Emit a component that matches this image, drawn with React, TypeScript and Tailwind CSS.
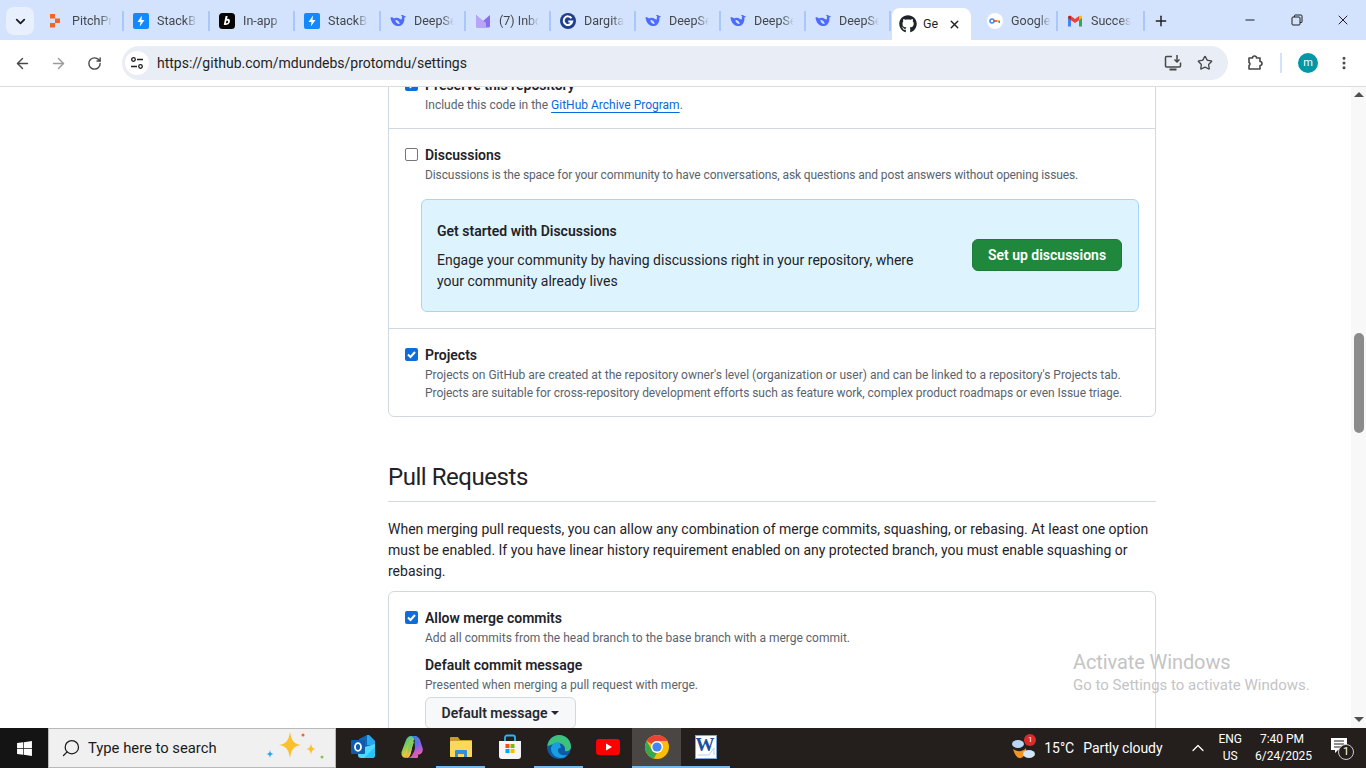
import { ReactNode } from 'react'
import { ArrowLeft, ArrowRight, ChevronDown, ChevronUp, EllipsisVertical, Minus, Plus, RotateCw, Search, Star, X } from 'lucide-react'
import { FaGithub, FaWindows } from 'react-icons/fa'

const font = { fontFamily: 'Roboto, "Noto Sans", sans-serif' }

const PitchIcon = () => (
  <svg width="16" height="16" viewBox="0 0 16 16">
    <rect x="2" y="1" width="5" height="4.5" fill="#f26522" />
    <rect x="7" y="5.500" width="5" height="4.500" fill="#f26522" />
    <rect x="2" y="10" width="5" height="4.500" fill="#f26522" />
  </svg>
)
const StackIcon = () => (
  <svg width="16" height="16" viewBox="0 0 16 16">
    <rect width="16" height="16" rx="2" fill="#1389fd" />
    <path d="M9 2.500 4.500 9h3L6.800 13.500 11.500 7h-3z" fill="#fff" />
  </svg>
)
const BoltIcon = () => (
  <svg width="16" height="16" viewBox="0 0 16 16">
    <rect width="16" height="16" rx="3.500" fill="#050505" />
    <path d="M6.600 3h2l-.6 3c2.400-.6 3.400 1 2.800 3-.6 2.300-3.200 3.500-6 2.800zM7.400 7.800 6.900 10.200c1.400.2 2.200-.4 2.300-1.400.1-.9-.7-1.300-1.800-1z" fill="#fff" />
  </svg>
)
const DeepSeekIcon = () => (
  <svg width="16" height="16" viewBox="0 0 16 16">
    <path d="M.5 4.500C2 3.800 3 4.600 4 5.500 5.500 4.500 8 4.600 10 6c.8.600 1.500.5 2 0-.4-.8-.3-1.800.3-2.400L11 2.400c1-.5 2.200-.4 3 .4.500.5 1 .4 1.800.2-.3 1.200-.9 1.600-1.500 1.800.4 2.200-.3 5-2 6.600-1.800 1.700-4.300 2-6.300 1.300C3 11.700.9 8.500.5 4.500z" fill="#4d6bfe" />
    <path d="M5.500 6.800c2 .3 3.800 1.800 4.200 4.200-2.400.1-4.400-1.700-4.200-4.200z" fill="#d3e3fd" />
  </svg>
)
const ProtonIcon = () => (
  <svg width="16" height="16" viewBox="0 0 16 16">
    <path d="M1 2 8 8l7-6v11a1.500 1.500 0 0 1-1.500 1.500h-11A1.500 1.500 0 0 1 1 13z" fill="#8a6cf0" />
    <path d="M1 2 8 8l3 1.500v5H2.500A1.500 1.500 0 0 1 1 13z" fill="#b9a5f7" />
  </svg>
)
const DargitaIcon = () => (
  <svg width="16" height="16" viewBox="0 0 16 16">
    <circle cx="8" cy="8" r="8" fill="#1f3f8f" />
    <path d="M11.500 5.200A4.300 4.300 0 1 0 12.200 8.500H8.300" fill="none" stroke="#fff" strokeWidth="2" />
  </svg>
)
const GoogleKeyIcon = () => (
  <svg width="16" height="16" viewBox="0 0 16 16">
    <circle cx="8" cy="8" r="8" fill="#fff" />
    <circle cx="5" cy="8" r="2" fill="none" stroke="#4285f4" strokeWidth="1.500" />
    <rect x="7" y="7.200" width="3" height="1.600" fill="#ea4335" />
    <rect x="10" y="7.200" width="3" height="1.600" fill="#fbbc04" />
    <rect x="11.500" y="8" width="1.500" height="2" fill="#34a853" />
  </svg>
)
const GmailIcon = () => (
  <svg width="16" height="16" viewBox="0 0 16 16">
    <path d="M1 4v9.500h3V7z" fill="#4285f4" />
    <path d="M15 4v9.500h-3V7z" fill="#34a853" />
    <path d="M12 3v4.200l3-2.200V4c0-1-1.300-1.700-2.200-1z" fill="#fbbc04" />
    <path d="M4 3v4.200L8 10l4-2.800V3L8 6z" fill="#ea4335" />
    <path d="M1 4v1l3 2.200V3C3 2.300 1 3 1 4z" fill="#c5221f" />
  </svg>
)

type TabData = { icon: ReactNode; title: string; width: string }

const tabsLeft: TabData[] = [
  { icon: <PitchIcon />, title: 'PitchPr', width: 'w-[85px]' },
  { icon: <StackIcon />, title: 'StackBl', width: 'w-[86px]' },
  { icon: <BoltIcon />, title: 'In-app', width: 'w-[85px]' },
  { icon: <StackIcon />, title: 'StackBl', width: 'w-[86px]' },
  { icon: <DeepSeekIcon />, title: 'DeepSe', width: 'w-[85px]' },
  { icon: <ProtonIcon />, title: '(7) Inbc', width: 'w-[85px]' },
  { icon: <DargitaIcon />, title: 'Dargita', width: 'w-[85px]' },
  { icon: <DeepSeekIcon />, title: 'DeepSe', width: 'w-[85px]' },
  { icon: <DeepSeekIcon />, title: 'DeepSe', width: 'w-[85px]' },
  { icon: <DeepSeekIcon />, title: 'DeepSe', width: 'w-[85px]' },
]

const Tab = ({ icon, title, width }: TabData) => (
  <div className={`${width} h-[20px] flex items-center border-r-2 border-[#a8c7fa] pl-[9px] shrink-0`}>
    <div className="w-[16px] h-[16px] shrink-0">{icon}</div>
    <div
      className="ml-[8px] mt-[2px] w-[40px] overflow-hidden whitespace-nowrap text-[12.5px] text-[#44474a]"
      style={{ maskImage: 'linear-gradient(to right, black 70%, transparent)' }}
    >
      {title}
    </div>
  </div>
)

const TabStrip = () => (
  <div className="h-[40px] bg-[#d3e3fd] flex items-end relative shrink-0">
    <div className="ml-[6px] mb-[5px] w-[28px] h-[28px] rounded-lg bg-[#e8f0fe] flex items-center justify-center shrink-0">
      <ChevronDown size={15} strokeWidth={3} color="#1f1f1f" />
    </div>
    <div className="ml-[5px] h-[40px] flex items-center pt-[1px]">
      {tabsLeft.map((t, i) => (
        <Tab key={i} {...t} />
      ))}
      <div className="w-[79px] h-[32px] mt-[7px] ml-[1px] bg-white rounded-t-lg flex items-center pl-[7px] shrink-0">
        <FaGithub size={18} color="#1f2328" />
        <span className="ml-[6px] w-[16px] overflow-hidden text-[12.5px] text-[#1f1f1f]">Ge</span>
        <X size={13} strokeWidth={2.5} className="ml-[9px]" color="#1f1f1f" />
      </div>
      <div className="w-[7px]" />
      <Tab icon={<GoogleKeyIcon />} title="Google" width="w-[80px]" />
      <Tab icon={<GmailIcon />} title="Success" width="w-[87px]" />
      <Plus size={16} strokeWidth={2.2} color="#1f1f1f" className="ml-[8px]" />
    </div>
    <div className="ml-auto h-[40px] flex items-center pr-[15px]">
      <Minus size={14} color="#1f1f1f" />
      <svg width="12" height="12" viewBox="0 0 12 12" fill="none" stroke="#1f1f1f" strokeWidth="1" className="ml-[34px]">
        <rect x="1" y="3" width="8" height="8" rx="1" />
        <path d="M3.500 3V1.500a.5.5 0 0 1 .5-.5h6a1 1 0 0 1 1 1v6a.5.5 0 0 1-.5.5H9" />
      </svg>
      <X size={16} strokeWidth={1.5} color="#1f1f1f" className="ml-[32px]" />
    </div>
  </div>
)

const InstallIcon = () => (
  <svg width="18" height="18" viewBox="0 0 18 18" fill="none" stroke="#474747" strokeWidth="1.500">
    <path d="M8 2.500H2.500a1 1 0 0 0-1 1V12a1 1 0 0 0 1 1h13a1 1 0 0 0 1-1V8.500" />
    <path d="M13 1v7M10.500 5.500 13 8l2.500-2.500" />
    <path d="M5.500 15.500h7" strokeWidth="2" />
  </svg>
)

const ExtensionIcon = () => (
  <svg width="18" height="18" viewBox="0 0 18 18" fill="none" stroke="#474747" strokeWidth="1.600" strokeLinejoin="round">
    <path d="M3 4h3.500a2 2 0 0 1 4 0H14v3.500a2 2 0 0 1 0 4V15H3v-3.500a1.800 1.800 0 0 0 1-1.500 1.800 1.800 0 0 0-1-1.500z" />
  </svg>
)

const Toolbar = () => (
  <div className="h-[47px] bg-white border-b border-[#dcdcdc] flex items-center shrink-0">
    <ArrowLeft size={17} strokeWidth={2} color="#474747" className="ml-[14px]" />
    <ArrowRight size={17} strokeWidth={2} color="#9a9a9a" className="ml-[19px]" />
    <RotateCw size={15} strokeWidth={2.2} color="#474747" className="ml-[20px]" />
    <div className="ml-[20px] w-[1106px] h-[34px] rounded-full bg-[#e9eef6] flex items-center pl-[3px] pr-[15px]">
      <div className="w-[24px] h-[24px] rounded-full bg-white flex items-center justify-center">
        <svg width="14" height="14" viewBox="0 0 14 14" fill="none" stroke="#1f1f1f" strokeWidth="1.300">
          <circle cx="3.500" cy="3.500" r="1.800" />
          <path d="M7 3.500h6M1 10.500h6" />
          <circle cx="10.500" cy="10.500" r="1.800" />
        </svg>
      </div>
      <span className="ml-[8px] text-[14px] text-[#1f1f1f]">https://github.com/mdundebs/protomdu/settings</span>
      <div className="ml-auto">
        <InstallIcon />
      </div>
      <Star size={16} strokeWidth={2} color="#474747" className="ml-[15px]" />
    </div>
    <div className="ml-[18px]">
      <ExtensionIcon />
    </div>
    <div className="ml-[16px] w-[2px] h-[20px] bg-[#d3e3fd]" />
    <div className="ml-[16px] w-[20px] h-[20px] rounded-full bg-[#0097a7] text-white text-[11px] flex items-center justify-center">m</div>
    <EllipsisVertical size={16} strokeWidth={2.5} color="#474747" className="ml-[18px]" />
  </div>
)

const Check = ({ checked = true }: { checked?: boolean }) =>
  checked ? (
    <div className="w-[13px] h-[13px] -mt-[1px] rounded-[2px] bg-[#0f6cdb] flex items-center justify-center shrink-0">
      <svg width="11" height="11" viewBox="0 0 11 11" fill="none" stroke="#fff" strokeWidth="2">
        <path d="M2 5.500 4.500 8 9 3" />
      </svg>
    </div>
  ) : (
    <div className="w-[13px] h-[13px] -mt-[1px] rounded-[2px] bg-white border border-[#767676] shrink-0" />
  )

const Title = ({ children }: { children: ReactNode }) => (
  <div className="text-[14px] leading-[20px] font-semibold text-[#1f2328]">{children}</div>
)

const Note = ({ children, tight = '' }: { children: ReactNode; tight?: string }) => (
  <div className={`text-[12px] leading-[18px] text-[#59636e] whitespace-nowrap ${tight}`}>{children}</div>
)

const Settings = () => (
  <div className="ml-[388px] w-[768px] -mt-[13px]">
    <div className="border border-[#d1d9e0] rounded-b-md">
      <div className="h-[54px] px-[16px] border-b border-[#d1d9e0]">
        <div className="flex items-center gap-[7px] h-[20px]">
          <Check />
          <Title>Preserve this repository</Title>
        </div>
        <div className="pl-[20px] pt-[1px]">
          <Note>
            Include this code in the <span className="text-[#0969da] underline underline-offset-[3px]">GitHub Archive Program</span>.
          </Note>
        </div>
      </div>
      <div className="h-[200px] px-[16px] pt-[16px] border-b border-[#d1d9e0]">
        <div className="flex items-center gap-[7px] h-[20px]">
          <Check checked={false} />
          <Title>Discussions</Title>
        </div>
        <div className="pl-[20px] pt-[1px]">
          <Note tight="tracking-[-0.1px]">Discussions is the space for your community to have conversations, ask questions and post answers without opening issues.</Note>
        </div>
        <div className="ml-[16px] mt-[15px] h-[113px] w-[718px] rounded-md border border-[#a3d5ff] bg-[#ddf4ff] pl-[15px] pr-[16px] flex items-center">
          <div className="w-[500px] pt-[2px]">
            <Title>Get started with Discussions</Title>
            <p className="mt-[9px] text-[14px] leading-[21px] text-[#1f2328]">
              Engage your community by having discussions right in your repository, where your community already lives
            </p>
          </div>
          <button className="ml-auto -mt-[2px] pt-[1px] h-[32px] w-[150px] rounded-md bg-[#1f883d] border border-[#1c7a37] text-white text-[14px] font-semibold">
            Set up discussions
          </button>
        </div>
      </div>
      <div className="h-[87px] px-[16px] pt-[16px]">
        <div className="flex items-center gap-[7px] h-[20px]">
          <Check />
          <Title>Projects</Title>
        </div>
        <div className="pl-[20px] pt-[1px]">
          <Note>Projects on GitHub are created at the repository owner's level (organization or user) and can be linked to a repository's Projects tab.</Note>
          <Note tight="tracking-[-0.05px]">Projects are suitable for cross-repository development efforts such as feature work, complex product roadmaps or even Issue triage.</Note>
        </div>
      </div>
    </div>
    <h2 className="mt-[42px] h-[43px] border-b border-[#d1d9e0] text-[24px] leading-[36px] tracking-[-0.45px] text-[#1f2328]">Pull Requests</h2>
    <p className="mt-[17px] text-[14px] leading-[21px] text-[#1f2328]">
      When merging pull requests, you can allow any combination of merge commits, squashing, or rebasing. At least one option must be enabled. If you have linear history requirement enabled on any protected branch, you must enable squashing or rebasing.
    </p>
    <div className="mt-[9px] border border-[#d1d9e0] rounded-t-md px-[16px] pt-[16px] h-[200px]">
      <div className="flex items-center gap-[7px] h-[20px]">
        <Check />
        <Title>Allow merge commits</Title>
      </div>
      <div className="pl-[20px] pt-[1px]">
        <Note>Add all commits from the head branch to the base branch with a merge commit.</Note>
        <div className="mt-[8px]">
          <Title>Default commit message</Title>
        </div>
        <div className="mt-[1px]">
          <Note>Presented when merging a pull request with merge.</Note>
        </div>
        <button className="mt-[3px] h-[32px] w-[151px] rounded-md border border-[#d1d9e0] bg-[#f6f8fa] text-[14px] font-semibold text-[#25292e] flex items-center justify-center gap-[4px]">
          Default message
          <span className="w-0 h-0 border-x-[4px] border-x-transparent border-t-[4px] border-t-[#25292e]" />
        </button>
      </div>
    </div>
  </div>
)

const Scrollbar = () => (
  <div className="w-[15px] bg-[#f8f8f8] flex flex-col items-center shrink-0 h-full">
    <div className="mt-[5px] w-0 h-0 border-x-[5px] border-x-transparent border-b-[5px] border-b-[#505050]" />
    <div className="mt-[236px] w-[10px] h-[100px] rounded-full bg-[#8b8b8b]" />
    <div className="mt-auto mb-[6px] w-0 h-0 border-x-[5px] border-x-transparent border-t-[5px] border-t-[#505050]" />
  </div>
)

const OutlookIcon = () => (
  <svg width="26" height="26" viewBox="0 0 26 26">
    <path d="M9 5 17 1h2l6 6v14H9z" fill="#1066b5" />
    <path d="M17 1h2l6 6v4h-8z" fill="#28a8ea" />
    <path d="M8 15l17-5v11a3 3 0 0 1-3 3H11a3 3 0 0 1-3-3z" fill="#50d9ff" />
    <path d="M14 24 25 13v8a3 3 0 0 1-3 3z" fill="#28c4f2" />
    <rect x="1" y="6" width="14" height="14" rx="1" fill="#0f5cac" />
    <ellipse cx="8" cy="13" rx="3" ry="3.800" fill="none" stroke="#fff" strokeWidth="1.800" />
  </svg>
)
const CopilotIcon = () => (
  <svg width="24" height="24" viewBox="0 0 24 24">
    <defs>
      <linearGradient id="copA" x1="0" y1="0" x2="0.600" y2="1">
        <stop offset="0" stopColor="#21b6d8" />
        <stop offset="0.5" stopColor="#8fce4c" />
        <stop offset="0.75" stopColor="#f6c343" />
        <stop offset="1" stopColor="#ef6a4c" />
      </linearGradient>
      <linearGradient id="copB" x1="0.300" y1="0" x2="0.700" y2="1">
        <stop offset="0" stopColor="#1f86e8" />
        <stop offset="0.5" stopColor="#9b5de5" />
        <stop offset="1" stopColor="#ee5fa0" />
      </linearGradient>
    </defs>
    <path d="M6 5c1-2 2.500-4 5-4h6c-2 1-3 3-3.500 5L11 17c-.5 3-2 6-5 6-3.500 0-5-3-4.500-6z" fill="url(#copA)" />
    <path d="M11 1h3.500C17 1 19 2.500 20 5l2.500 8c.5 3-1 6-4 6H13c-2 3-3.500 4-6 4h10c2-.5 1-4 0-6l-1-7c-.5-3-2-8-5-9z" fill="url(#copB)" />
    <path d="M14.500 6.500C17 6 19 6.500 20 8l2.500 6c.5 3-1.500 5.500-4 5.500H12c2-1.500 2.500-4 3-7z" fill="url(#copB)" />
    <path d="M11 17c1-4 1.500-7 3.500-10.500L10 9c-1.500 3-3 8-3 14 2 0 3.500-3 4-6z" fill="url(#copA)" />
  </svg>
)
const ExplorerIcon = () => (
  <svg width="22" height="20" viewBox="0 0 22 20">
    <path d="M0 1a1 1 0 0 1 1-1h7l2 3h12v16a1 1 0 0 1-1 1H1a1 1 0 0 1-1-1z" fill="#c89b2a" />
    <rect x="0" y="4" width="22" height="16" rx="1" fill="#fbd75b" />
    <path d="M5 20v-6a1 1 0 0 1 1-1h10a1 1 0 0 1 1 1v6h-3v-3H8v3z" fill="#2f8fd8" />
  </svg>
)
const StoreIcon = () => (
  <svg width="24" height="26" viewBox="0 0 24 26">
    <path d="M7 7V3.500A2 2 0 0 1 9 1.500h6a2 2 0 0 1 2 2V7" fill="none" stroke="#29b6f6" strokeWidth="1.800" />
    <path d="M1 7h22v15a3 3 0 0 1-3 3H4a3 3 0 0 1-3-3z" fill="#f5f5f5" />
    <rect x="7.500" y="10" width="4" height="4" fill="#f25022" />
    <rect x="12.500" y="10" width="4" height="4" fill="#7fba00" />
    <rect x="7.500" y="15" width="4" height="4" fill="#00a4ef" />
    <rect x="12.500" y="15" width="4" height="4" fill="#ffb900" />
  </svg>
)
const EdgeIcon = () => (
  <svg width="24" height="24" viewBox="0 0 24 24">
    <circle cx="12" cy="12" r="12" fill="#0c59a4" />
    <path d="M0.500 11C1 5 6 0 12 0c7 0 12 5 12 12 0 3-3 5-6 4 1-4-2-8-7-8-5 0-8 3-10.500 3z" fill="#3cc27d" />
    <path d="M11 7c-4 0-7 3-7 7 0 5 5 9 10 9 3 0 5-1 6-3-4 1-8 0-9-4-.5-2 1-3 3-3.500C13 10 13 7 11 7z" fill="#1b9de2" />
  </svg>
)
const YoutubeIcon = () => (
  <svg width="24" height="24" viewBox="0 0 24 24">
    <rect y="4" width="24" height="16" rx="3" fill="#f00" />
    <path d="M10 8.500 16 12l-6 3.500z" fill="#fff" />
  </svg>
)
const ChromeIcon = () => (
  <svg width="24" height="24" viewBox="0 0 24 24">
    <circle cx="12" cy="12" r="12" fill="#fbbc04" />
    <path d="M12 0a12 12 0 0 1 10.400 6H12a6 6 0 0 0-5.200 3L1.600 6A12 12 0 0 1 12 0z" fill="#ea4335" />
    <path d="M1.600 6 6.800 15a6 6 0 0 0 5.200 3l-3.300 5.500A12 12 0 0 1 1.600 6z" fill="#34a853" />
    <circle cx="12" cy="12" r="6" fill="#fff" />
    <circle cx="12" cy="12" r="4.600" fill="#4285f4" />
  </svg>
)
const WordIcon = () => (
  <svg width="22" height="24" viewBox="0 0 22 24">
    <rect x="0.500" y="0.500" width="21" height="23" fill="#fff" stroke="#7ea6d8" />
    <text x="10" y="16" textAnchor="middle" fill="#1d4f9f" fontSize="19" fontWeight="700" fontFamily="Liberation Serif, serif">W</text>
    <path d="M3 20h11l5-7v7" stroke="#b9cfe9" fill="none" />
  </svg>
)

const SparkIcon = () => (
  <svg width="64" height="34" viewBox="0 0 64 34">
    <path d="M25 1c1.500 9 4 12 11 13-7 1-9.500 4-11 13-1.500-9-4-12-11-13 7-1 9.500-4 11-13z" fill="#fbc02d" />
    <path d="M46 12c.5 4 1.500 5.500 5 6-3.500.5-4.500 2-5 6-.5-4-1.500-5.500-5-6 3.500-.5 4.500-2 5-6z" fill="#fbc02d" />
    <path d="M5 19c.3 2.500 1 3.500 3.500 4-2.500.5-3.200 1.500-3.500 4-.3-2.500-1-3.500-3.500-4 2.500-.5 3.200-1.500 3.500-4z" fill="#29a8e8" />
    <circle cx="38" cy="4" r="1.500" fill="#e8663c" />
    <circle cx="57" cy="26" r="1.500" fill="#8bc34a" />
  </svg>
)

const pinned: { icon: ReactNode; running?: boolean; active?: boolean }[] = [
  { icon: <OutlookIcon /> },
  { icon: <CopilotIcon /> },
  { icon: <ExplorerIcon />, running: true },
  { icon: <StoreIcon /> },
  { icon: <EdgeIcon />, running: true },
  { icon: <YoutubeIcon /> },
  { icon: <ChromeIcon />, running: true, active: true },
  { icon: <WordIcon />, running: true },
]

const Taskbar = () => (
  <div className="h-[40px] bg-[#241e1c] flex items-stretch shrink-0 text-white">
    <div className="w-[48px] bg-[#141414] flex items-center justify-center">
      <FaWindows size={17} color="#fff" />
    </div>
    <div className="w-[288px] bg-[#f0f0f0] border border-[#b8b8b8] flex items-center pl-[12px] relative">
      <Search size={20} strokeWidth={1.5} color="#1a1a1a" className="-scale-x-100" />
      <span className="ml-[7px] text-[14.8px] text-[#1a1a1a]">Type here to search</span>
      <div className="ml-auto mr-[6px]">
        <SparkIcon />
      </div>
    </div>
    <div className="flex pl-[2px]">
      {pinned.map((p, i) => (
        <div
          key={i}
          className={`w-[49px] flex items-center justify-center border-b-2 ${p.active ? 'bg-[#4a4644]' : ''} ${p.running ? 'border-[#76b9ed]' : 'border-transparent'}`}
        >
          {p.icon}
        </div>
      ))}
    </div>
    <div className="ml-auto flex items-center">
      <div className="relative w-[26px] h-[26px] mr-[7px]">
        <svg width="26" height="26" viewBox="0 0 26 26">
          <path d="M2 14c4 3 10 3 13-1 1 6-3 11-7 10-3-1-5-5-6-9z" fill="#f29423" />
          <ellipse cx="7" cy="9" rx="6" ry="4" fill="#b9d7f2" />
          <ellipse cx="18" cy="19" rx="6" ry="4" fill="#d3e6f7" />
        </svg>
        <div className="absolute -top-[1px] right-[1px] w-[12px] h-[12px] rounded-full bg-[#d92b2b] text-[8px] leading-[12px] text-center">1</div>
      </div>
      <span className="text-[14px] whitespace-nowrap">15°C</span>
      <span className="ml-[9px] text-[14px] tracking-[-0.1px] whitespace-nowrap">Partly cloudy</span>
      <ChevronUp size={20} strokeWidth={1.5} className="ml-[26px]" />
      <div className="ml-[10px] text-[12px] leading-[17px] text-center">
        ENG
        <br />
        US
      </div>
      <div className="ml-[13px] text-[12px] leading-[17px] text-center w-[54px] whitespace-nowrap">
        7:40 PM
        <br />
        6/24/2025
      </div>
      <div className="relative ml-[21px] mr-[12px] w-[24px] h-[24px]">
        <svg width="24" height="24" viewBox="0 0 24 24" fill="#fff">
          <path d="M1 2h16v12H8l-3 3v-3H1z" />
          <path d="M4 5h10M4 8h10M4 11h7" stroke="#241e1c" strokeWidth="1" />
        </svg>
        <div className="absolute bottom-0 right-0 w-[16px] h-[16px] rounded-full border border-[#cfcfcf] bg-[#241e1c] text-[11px] leading-[14px] text-center">1</div>
      </div>
    </div>
  </div>
)

export default function App() {
  return (
    <div className="w-[1366px] h-[768px] flex flex-col overflow-hidden bg-white relative" style={font}>
      <TabStrip />
      <Toolbar />
      <div className="flex-1 min-h-0 flex overflow-hidden">
        <div className="flex-1 min-w-0 overflow-hidden">
          <Settings />
        </div>
        <Scrollbar />
      </div>
      <Taskbar />
      <div className="absolute left-[1073px] top-[649px] text-[#c4c4c4] pointer-events-none">
        <div className="text-[20px] leading-[26px] tracking-[-0.1px]">Activate Windows</div>
        <div className="text-[15px] leading-[20px]">Go to Settings to activate Windows.</div>
      </div>
    </div>
  )
}
